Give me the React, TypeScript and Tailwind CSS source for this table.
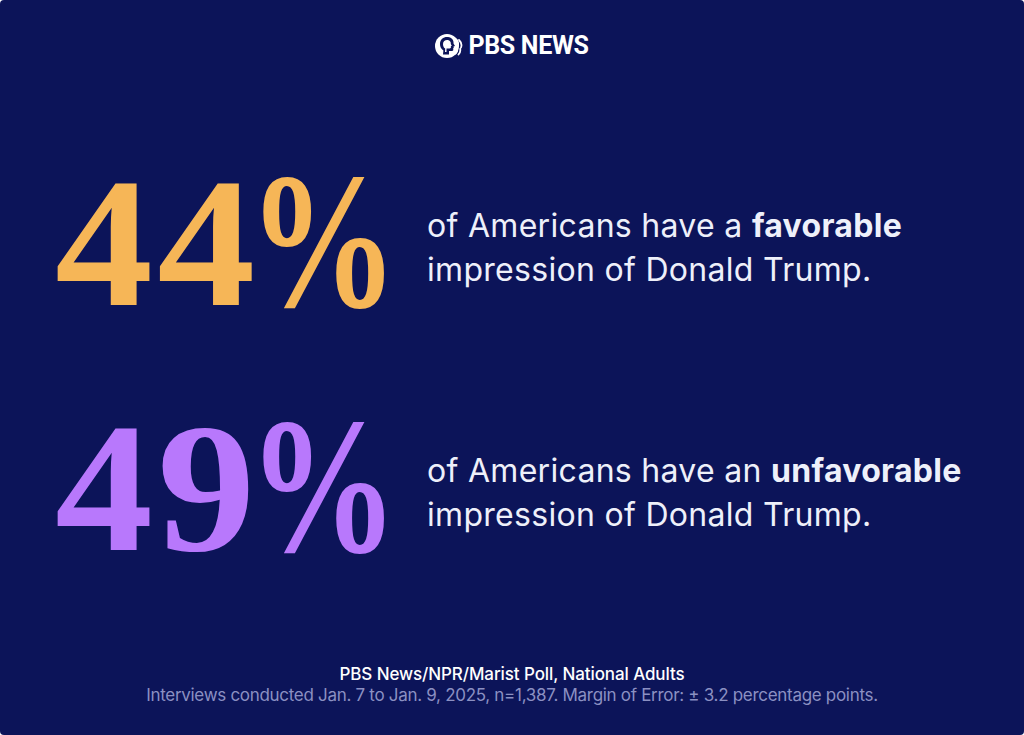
import React from 'react'

const serif = { fontFamily: '"Liberation Serif", "Times New Roman", serif' }

function PbsHead() {
  return (
    <svg width="28" height="26" viewBox="0 0 28 26" aria-hidden="true">
      <circle cx="12" cy="13" r="12" fill="#ffffff" />
      <path
        d="M5 11 C5 6 9 3.5 13 4 C17 4.5 19 7.5 18.5 10.5 L20 13 L18.5 13.6 L18.8 15 L18 15.6 L18.4 17 C17.6 18.3 15.8 18.2 14 18 L14 21.5 L8 21.5 L8.4 17.5 C5.8 15.8 5 13.5 5 11 Z"
        fill="#0c1459"
      />
      <path
        d="M8 11 C8 8 10.5 6.5 13 7 C15.5 7.5 16 9.5 15.8 11 L16.8 12.8 L15.8 13.2 L16 14.6 L15.3 15.2 C14.5 15.8 12.8 15.6 11.5 15.4 L11.5 19 L10 19 L10.2 15.6 C8.5 14.5 8 12.8 8 11 Z"
        fill="#ffffff"
      />
      <path d="M20.5 6 C23 8 23.6 10 23 12.5 M21.5 15.5 C22.5 17 22 19 20.5 20.5" stroke="#ffffff" strokeWidth="1.8" fill="none" strokeLinecap="round" />
      <path d="M24 7 C26.5 9.5 27 12 26 14.5 M25.2 16 C25.6 18 24.8 20 23.5 21.5" stroke="#ffffff" strokeWidth="1.8" fill="none" strokeLinecap="round" />
    </svg>
  )
}

function Stat({
  value,
  color,
  lead,
  strong,
}: {
  value: string
  color: string
  lead: string
  strong: string
}) {
  return (
    <div className="flex items-center pl-[55px]">
      <div
        className={`w-[372px] shrink-0 text-[185px] leading-none font-bold whitespace-nowrap ${color}`}
        style={serif}
      >
        <span className="inline-block origin-left scale-x-[1.06] tracking-[4px]">{value}</span>
        <span className="inline-block text-[150px] origin-bottom-left translate-y-[8px] scale-y-[1.3]">%</span>
      </div>
      <p className="mt-[10px] text-[32px] leading-[44px] text-[#eef0fa] tracking-[0.3px]">
        {lead} <span className="font-bold">{strong}</span>
        <br />
        impression of Donald Trump.
      </p>
    </div>
  )
}

export default function App() {
  return (
    <div className="bg-white">
      <div
        className="h-[735px] w-full rounded-[4px] bg-[#0c1459] flex flex-col"
        style={{ fontFamily: 'Inter, "Liberation Sans", sans-serif' }}
      >
        <div className="pt-[33px] flex items-center justify-center gap-[5px]">
          <PbsHead />
          <span
            className="text-[25px] leading-[26px] font-bold text-white tracking-[-0.3px]"
            style={{ fontFamily: 'Roboto, "Liberation Sans", sans-serif' }}
          >
            PBS NEWS
          </span>
        </div>

        <div className="mt-[91px] flex flex-col gap-[60px]">
          <Stat value="44" color="text-[#f6b657]" lead="of Americans have a" strong="favorable" />
          <Stat value="49" color="text-[#b878fc]" lead="of Americans have an" strong="unfavorable" />
        </div>

        <div className="mt-auto pb-[29px] text-center text-[17px] leading-[21px] tracking-[-0.3px]">
          <p className="text-white font-medium tracking-[-0.1px]">PBS News/NPR/Marist Poll, National Adults</p>
          <p className="text-[#8b90c2]">
            Interviews conducted Jan. 7 to Jan. 9, 2025, n=1,387. Margin of Error: ± 3.2 percentage points.
          </p>
        </div>
      </div>
    </div>
  )
}
